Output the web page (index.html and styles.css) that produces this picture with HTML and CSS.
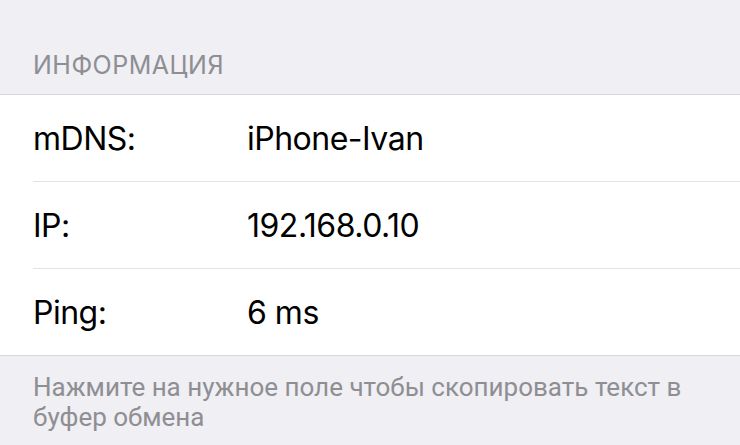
FILE: index.html
```html
<!DOCTYPE html>
<html lang="ru">
<head>
    <meta charset="UTF-8">
    <meta name="viewport" content="width=device-width, initial-scale=1.0">
    <title>Информация</title>
    <link rel="stylesheet" href="styles.css">
</head>
<body>
    <div class="section-header">ИНФОРМАЦИЯ</div>

    <div class="table">
        <div class="row">
            <span class="row-label">mDNS:</span>
            <span class="row-value">iPhone-Ivan</span>
        </div>
        <div class="row">
            <span class="row-label">IP:</span>
            <span class="row-value">192.168.0.10</span>
        </div>
        <div class="row">
            <span class="row-label">Ping:</span>
            <span class="row-value">6 ms</span>
        </div>
    </div>

    <div class="section-footer">
        Нажмите на нужное поле чтобы скопировать текст в буфер обмена
    </div>
</body>
</html>
```

FILE: styles.css
```css
body {
    margin: 0;
    background-color: #efeff4;
    font-family: 'Inter', 'Noto Sans', sans-serif;
    color: #000;
}

.section-header {
    padding: 49px 33px 0;
    height: 45px;
    font-size: 25px;
    line-height: 32px;
    color: #8e8e93;
    letter-spacing: 0.5px;
}

.table {
    background-color: #ffffff;
    border-top: 1px solid #d8d8dc;
    border-bottom: 1px solid #d8d8dc;
}

.row {
    display: flex;
    align-items: center;
    height: 86px;
    margin-left: 33px;
    font-size: 32px;
    letter-spacing: -0.5px;
}

.row + .row {
    border-top: 1px solid #e3e3e6;
}

.row-label {
    width: 214px;
}

.section-footer {
    padding: 16px 33px 0;
    font-family: 'Roboto', sans-serif;
    font-size: 26px;
    line-height: 30px;
    color: #8e8e93;
}
```
